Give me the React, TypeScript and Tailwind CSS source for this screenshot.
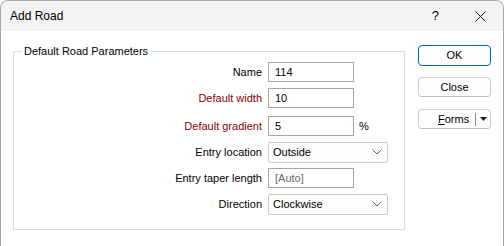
import React from "react";

const font = { fontFamily: '"Liberation Sans", Arial, sans-serif' };

function Chevron() {
  return (
    <svg width="10" height="6" viewBox="0 0 10 6" className="shrink-0">
      <path d="M0.5 0.5 L5 5 L9.5 0.5" fill="none" stroke="#5f5f5f" strokeWidth="1" />
    </svg>
  );
}

function Row({ label, red, children, mt }: { label: string; red?: boolean; children: React.ReactNode; mt: string }) {
  return (
    <div className={`flex items-center h-[20px] ${mt}`}>
      <div className={`w-[248px] text-right text-[11px] leading-none ${red ? "text-[#8c0000]" : "text-black"}`}>{label}</div>
      <div className="ml-[6px] flex items-center h-full">{children}</div>
    </div>
  );
}

function TextBox({ value, gray }: { value: string; gray?: boolean }) {
  return (
    <div className={`w-[86px] h-[20px] border border-[#a6a6a6] bg-white flex items-center pl-[6px] text-[11px] ${gray ? "text-[#6b6b6b]" : "text-black"}`}>
      {value}
    </div>
  );
}

function Select({ value }: { value: string }) {
  return (
    <div className="w-[120px] h-[21px] border border-[#cacaca] rounded-[2px] bg-[#fdfdfd] flex items-center justify-between pl-[4px] pr-[5px] text-[11px] text-black">
      <span>{value}</span>
      <Chevron />
    </div>
  );
}

export default function App() {
  return (
    <div className="w-[504px] h-[246px] bg-white overflow-hidden" style={font}>
      <div className="w-[504px] h-[246px] border border-b-0 border-[#a9a9a9] rounded-t-[8px] overflow-hidden flex flex-col">
        <div className="h-[30px] bg-[#f3f3f3] flex items-center shrink-0">
          <span className="ml-[9px] text-[12px] text-black">Add Road</span>
          <span className="ml-auto text-[13px] text-black mr-[36px]">?</span>
          <svg width="11" height="11" viewBox="0 0 11 11" className="mr-[17px]">
            <path d="M0.5 0.5 L10.5 10.5 M10.5 0.5 L0.5 10.5" stroke="#1a1a1a" strokeWidth="1" />
          </svg>
        </div>
        <div className="flex flex-1">
          <div className="ml-[12px] mt-[20px] w-[392px] h-[179px] border border-[#dcdcdc] relative">
            <span className="absolute left-[8px] -top-[8px] bg-white px-[2px] text-[11px] text-black leading-[14px]">
              Default Road Parameters
            </span>
            <div className="pt-[10px] flex flex-col">
              <Row label="Name" mt="mt-0">
                <TextBox value="114" />
              </Row>
              <Row label="Default width" red mt="mt-[6px]">
                <TextBox value="10" />
              </Row>
              <Row label="Default gradient" red mt="mt-[8px]">
                <TextBox value="5" />
                <span className="ml-[5px] text-[11px] text-black">%</span>
              </Row>
              <Row label="Entry location" mt="mt-[6px]">
                <Select value="Outside" />
              </Row>
              <Row label="Entry taper length" mt="mt-[6px]">
                <TextBox value="[Auto]" gray />
              </Row>
              <Row label="Direction" mt="mt-[6px]">
                <Select value="Clockwise" />
              </Row>
            </div>
          </div>
          <div className="ml-[13px] mt-[14px] flex flex-col w-[73px]">
            <div className="h-[21px] border border-[#0067c0] rounded-[4px] bg-[#fdfdfd] flex items-center justify-center text-[11px] text-black">
              OK
            </div>
            <div className="mt-[11px] h-[20px] border border-[#d0d0d0] border-b-[#bcbcbc] rounded-[4px] bg-[#fdfdfd] flex items-center justify-center text-[11px] text-black">
              Close
            </div>
            <div className="mt-[12px] h-[20px] border border-[#d0d0d0] border-b-[#bcbcbc] rounded-[4px] bg-[#fdfdfd] flex items-center text-[11px] text-black">
              <span className="ml-[19px]">
                <span className="underline">F</span>orms
              </span>
              <span className="ml-[6px] w-px h-[13px] bg-[#8a8a8a]" />
              <svg width="7" height="4" viewBox="0 0 7 4" className="ml-[4px]">
                <path d="M0 0 L7 0 L3.5 4 Z" fill="#1a1a1a" />
              </svg>
            </div>
          </div>
        </div>
      </div>
    </div>
  );
}
